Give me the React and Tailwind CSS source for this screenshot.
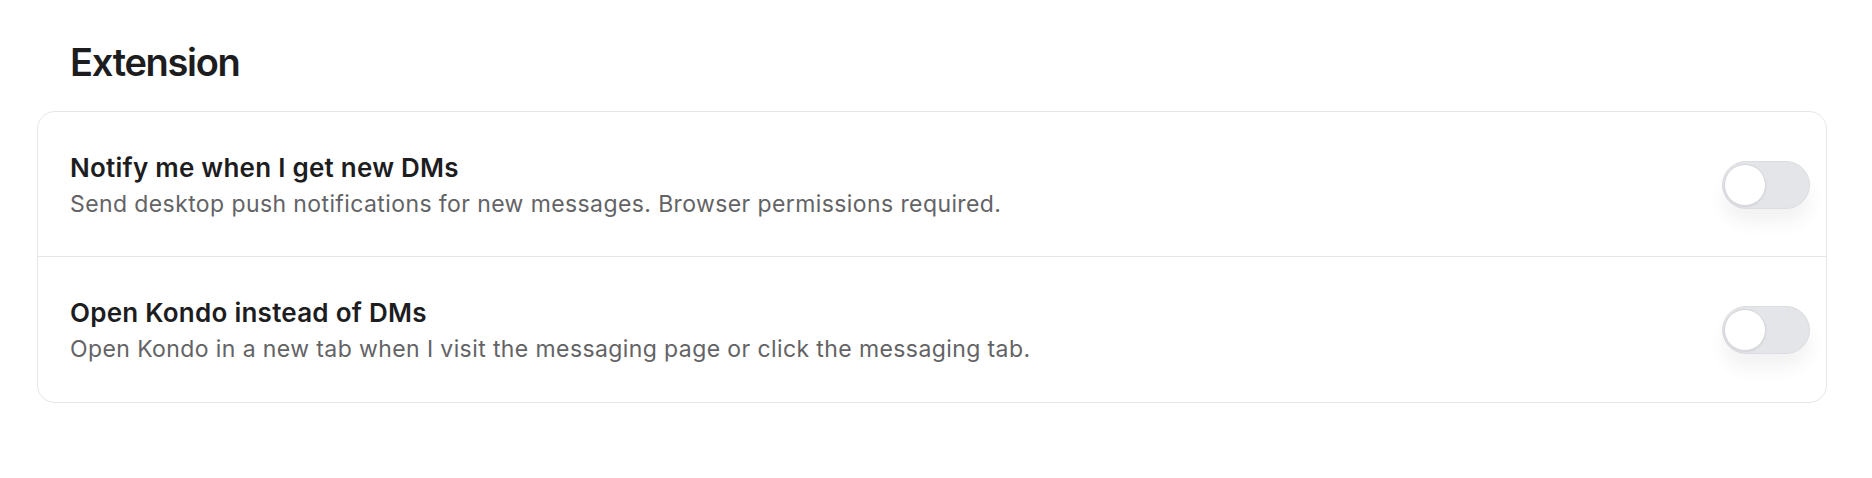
import React from "react";

function Toggle() {
  return (
    <div className="relative h-[48px] w-[88px] shrink-0 rounded-full border border-[#dcdde1] bg-[#e4e5e9] shadow-[0_14px_18px_rgba(0,0,0,0.05)]">
      <div className="absolute left-[1px] top-[2px] h-[42px] w-[42px] rounded-full border border-[#d6d7db] bg-white shadow-[0_1px_2px_rgba(0,0,0,0.08)]" />
    </div>
  );
}

function Row({ title, desc, last }) {
  return (
    <div
      className={
        "flex items-center justify-between pl-[32px] pr-[16px] pt-[40px] " +
        (last ? "pb-[39px]" : "pb-[38px] border-b border-[#e6e6e8]")
      }
    >
      <div className="flex flex-col">
        <div className="text-[26px] leading-[32px] font-semibold tracking-[0.25px] text-[#1d1d1f]">{title}</div>
        <div className="mt-[6px] text-[23px] leading-[28px] tracking-[0.4px] text-[#636366]">{desc}</div>
      </div>
      <Toggle />
    </div>
  );
}

export default function App() {
  return (
    <div
      className="min-h-[478px] w-full bg-white pl-[37px] pr-[45px] pt-[42px]"
      style={{ fontFamily: "Inter, 'Noto Sans', sans-serif" }}
    >
      <h1 className="pl-[33px] text-[38px] leading-[40px] font-semibold tracking-[-1.3px] text-[#1d1d1f]">
        Extension
      </h1>
      <div className="mt-[29px] rounded-[18px] border border-[#e6e6e8] bg-white">
        <Row
          title="Notify me when I get new DMs"
          desc="Send desktop push notifications for new messages. Browser permissions required."
        />
        <Row
          title="Open Kondo instead of DMs"
          desc="Open Kondo in a new tab when I visit the messaging page or click the messaging tab."
          last
        />
      </div>
    </div>
  );
}
